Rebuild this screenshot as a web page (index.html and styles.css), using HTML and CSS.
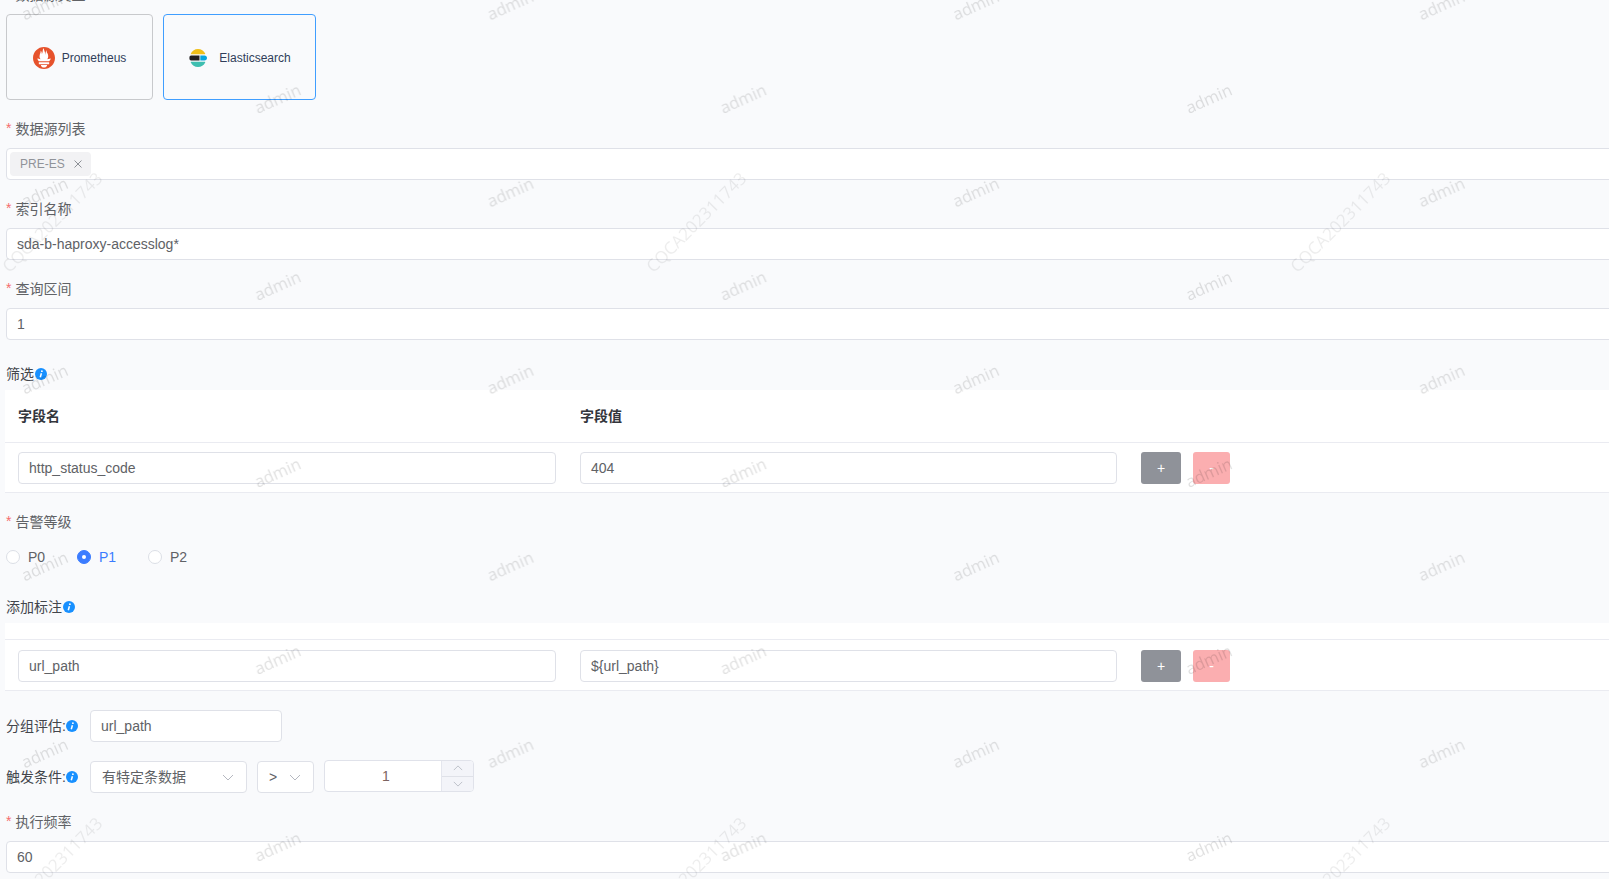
FILE: index.html
```html
<!DOCTYPE html>
<html lang="zh-CN">
<head>
<meta charset="utf-8">
<title>告警规则</title>
<link rel="stylesheet" href="styles.css">
</head>
<body>
<main class="page">
  <div class="label req"><i class="star">*</i>数据源类型</div>
  <div class="cards">
    <div class="card">
      <svg class="logo" viewBox="0 0 24 24"><circle cx="12" cy="12" r="11.5" fill="#fff"/><path fill="#e6522c" d="M12 0C5.373 0 0 5.372 0 12c0 6.627 5.373 12 12 12s12-5.373 12-12c0-6.628-5.373-12-12-12zm0 22.46c-1.885 0-3.414-1.26-3.414-2.814h6.828c0 1.553-1.528 2.813-3.414 2.813zm5.64-3.745H6.36v-2.046h11.28v2.046zm-.04-3.098H6.391c-.037-.043-.075-.086-.111-.13-1.155-1.401-1.427-2.133-1.69-2.879-.005-.025 1.4.287 2.395.511 0 0 .513.119 1.262.255-.72-.843-1.147-1.915-1.147-3.01 0-2.406 1.845-4.508 1.18-6.207.648.053 1.34 1.367 1.387 3.422.689-.951.977-2.69.977-3.755 0-1.103.727-2.385 1.454-2.429-.648 1.069.168 1.984.894 4.256.272.854.237 2.29.447 3.201.07-1.892.395-4.652 1.595-5.605-.529 1.2.079 2.702.494 3.424.671 1.164 1.078 2.047 1.078 3.716 0 1.119-.413 2.173-1.11 2.997.792-.149 1.34-.283 1.34-.283l2.573-.502s-.374 1.538-1.81 3.019z"/></svg>
      <span>Prometheus</span>
    </div>
    <div class="card active">
      <svg class="logo-es" viewBox="0 0 20 20">
        <path fill="#f0bf1a" d="M2.6 6.2C3.8 3 6.6 1 10 1c3.2 0 5.9 1.8 7.2 4.6.2.4 0 .6-.4.6z"/>
        <path fill="#231f20" d="M3 7.5h8.5v5H3C2.2 12.5 1.4 11.8 1.400 10S2.200 7.500 3 7.500z"/>
        <path fill="#07a5de" d="M12.300 7.500h4.200c1.500 0 2.500 1.100 2.500 2.500s-1 2.500-2.500 2.500h-4.200z"/>
        <path fill="#3ebeb0" d="M3 13.800h13.800c.4 0 .6.200.4.600C15.900 17.200 13.200 19 10 19c-3.300 0-6-2-7.300-4.800-.1-.200 0-.400.300-.400z"/>
      </svg>
      <span>Elasticsearch</span>
    </div>
  </div>

  <section class="item">
    <div class="label"><i class="star">*</i>数据源列表</div>
    <div class="input tags"><span class="tag">PRE-ES<svg class="tag-x" viewBox="0 0 8 8"><path d="M.5.5l7 7M7.500.5l-7 7"/></svg></span></div>
  </section>
  <section class="item">
    <div class="label"><i class="star">*</i>索引名称</div>
    <div class="input">sda-b-haproxy-accesslog*</div>
  </section>
  <section class="item">
    <div class="label"><i class="star">*</i>查询区间</div>
    <div class="input">1</div>
  </section>

  <div class="label dark filter-label">筛选<svg class="info" viewBox="0 0 12 12"><circle cx="6" cy="6" r="6"/><circle class="info-i" cx="6.900" cy="3.200" r=".9"/><path class="info-s" d="M6.400 5.200 5.300 9.300"/></svg></div>
  <div class="table">
    <div class="row head"><div class="cell">字段名</div><div class="cell">字段值</div><div class="cell"></div></div>
    <div class="row">
      <div class="cell"><div class="input">http_status_code</div></div>
      <div class="cell"><div class="input">404</div></div>
      <div class="cell actions"><span class="btn add">+</span><span class="btn del">-</span></div>
    </div>
  </div>

  <div class="label level-label"><i class="star">*</i>告警等级</div>
  <div class="radios">
    <span class="radio"><i class="dot"></i>P0</span>
    <span class="radio on"><i class="dot"></i>P1</span>
    <span class="radio"><i class="dot"></i>P2</span>
  </div>

  <div class="label dark note-label">添加标注<svg class="info" viewBox="0 0 12 12"><circle cx="6" cy="6" r="6"/><circle class="info-i" cx="6.900" cy="3.200" r=".9"/><path class="info-s" d="M6.400 5.200 5.300 9.300"/></svg></div>
  <div class="table">
    <div class="row head empty"></div>
    <div class="row tall">
      <div class="cell"><div class="input">url_path</div></div>
      <div class="cell"><div class="input">${url_path}</div></div>
      <div class="cell actions"><span class="btn add">+</span><span class="btn del">-</span></div>
    </div>
  </div>

  <div class="inline group">
    <div class="label dark inline-label">分组评估:<svg class="info" viewBox="0 0 12 12"><circle cx="6" cy="6" r="6"/><circle class="info-i" cx="6.900" cy="3.200" r=".9"/><path class="info-s" d="M6.400 5.200 5.300 9.300"/></svg></div>
    <div class="input w-group">url_path</div>
  </div>
  <div class="inline trigger">
    <div class="label dark inline-label">触发条件:<svg class="info" viewBox="0 0 12 12"><circle cx="6" cy="6" r="6"/><circle class="info-i" cx="6.900" cy="3.200" r=".9"/><path class="info-s" d="M6.400 5.200 5.300 9.300"/></svg></div>
    <div class="input select w-sel">有特定条数据<svg class="chev" viewBox="0 0 12 7"><path d="M1 1l5 5 5-5"/></svg></div>
    <div class="input select w-op">&gt;<svg class="chev" viewBox="0 0 12 7"><path d="M1 1l5 5 5-5"/></svg></div>
    <div class="number">
      <div class="num-val">1</div>
      <div class="num-handler">
        <span class="num-btn"><svg class="arrow" viewBox="0 0 12 7"><path d="M1 6l5-5 5 5"/></svg></span>
        <span class="num-btn"><svg class="arrow" viewBox="0 0 12 7"><path d="M1 1l5 5 5-5"/></svg></span>
      </div>
    </div>
  </div>
  <section class="item last">
    <div class="label"><i class="star">*</i>执行频率</div>
    <div class="input">60</div>
  </section>
</main>

<svg class="watermark" width="1609" height="879" aria-hidden="true">
  <defs>
    <pattern id="wm-admin" x="0" y="-40" width="465.600" height="187" patternUnits="userSpaceOnUse">
      <text class="wm-a" text-anchor="middle" transform="translate(45 46) rotate(-24)" y="5">admin</text>
      <text class="wm-a" text-anchor="middle" transform="translate(278 139.500) rotate(-24)" y="5">admin</text>
    </pattern>
    <pattern id="wm-id" x="-50" y="0" width="644" height="645" patternUnits="userSpaceOnUse">
      <text class="wm-b" text-anchor="middle" transform="translate(103 223) rotate(-45)" y="5">CQCA202311743</text>
    </pattern>
  </defs>
  <rect width="1609" height="879" fill="url(#wm-id)"/>
  <rect width="1609" height="879" fill="url(#wm-admin)"/>
</svg>
</body>
</html>
```
FILE: styles.css
```css
* { box-sizing: border-box; }
html, body { margin: 0; height: 879px; overflow: hidden; }
body {
  background: #f9fafc;
  color: #606266;
  font: 14px/20px "Liberation Sans", "Noto Sans CJK SC", sans-serif;
  position: relative;
}
.page { width: 1700px; margin-top: -15px; padding-left: 6px; }
.label { height: 20px; display: flex; align-items: center; color: #606266; font-size: 14px; white-space: nowrap; }
.label.dark { color: #43464c; }
.star { font-style: normal; color: #f56c6c; width: 9.500px; font-size: 14px; position: relative; top: -1px; }
.cards { display: flex; gap: 10px; margin-top: 9px; }
.card { width: 147px; height: 86px; padding-top: 2px; border: 1px solid #c8c9cc; border-radius: 4px; display: flex; align-items: center; justify-content: center; gap: 7px; color: #303e5a; font-size: 12px; }
.card.active { width: 153px; border-color: #409eff; gap: 11px; }
.logo { width: 22px; height: 22px; flex: none; }
.logo-es { width: 20px; height: 20px; flex: none; }
.item { margin-top: 19px; }
.item .label { margin-bottom: 9px; }
.input { height: 32px; background: #fff; border: 1px solid #dfe1e8; border-radius: 4px; padding: 0 10px; line-height: 30px; color: #606266; white-space: nowrap; }
.tags { padding: 0 3px; display: flex; align-items: center; }
.tag { height: 24px; width: 81px; background: #f2f2f4; border-radius: 4px; color: #909399; font-size: 12px; line-height: 24px; padding-left: 10px; display: flex; align-items: center; }
.tag-x { width: 8px; height: 8px; margin-left: 9px; }
.tag-x path { stroke: #8d9096; stroke-width: 1; fill: none; }
.filter-label { margin-top: 24px; }
.info { width: 12px; height: 12px; flex: none; margin-left: 1px; }
.inline-label .info { margin-left: 0; }
.info circle { fill: #1890ff; }
.info .info-i { fill: #fff; }
.info-s { stroke: #fff; stroke-width: 1.500; fill: none; }
.table { margin-top: 6px; margin-left: -1px; background: #fff; }
.row { display: grid; grid-template-columns: 563px 561px 1fr; height: 50px; padding-top: 9px; align-items: start; border-bottom: 1px solid #eaebf1; }
.row.tall { height: 51px; padding-top: 10px; }
.row.head { height: 53px; padding-top: 16px; font-weight: 700; color: #33363c; }
.row.head.empty { height: 17px; padding-top: 0; }
.cell { padding: 0 12px; }
.cell:first-child { padding-left: 13px; }
.actions { display: flex; gap: 12px; }
.btn { width: 40px; height: 32px; border-radius: 3px; color: #fff; display: flex; align-items: center; justify-content: center; font-size: 14px; }
.btn.add { background: #8f9299; }
.btn.del { width: 37px; background: #fbaeb0; }
.level-label { margin-top: 19px; }
.radios { display: flex; margin-top: 15px; height: 20px; align-items: center; }
.radio { display: flex; align-items: center; gap: 8px; color: #606266; width: 71px; }
.radio.on { color: #3b7cff; }
.dot { width: 14px; height: 14px; border-radius: 50%; border: 1px solid #dcdfe6; background: #fff; display: block; position: relative; flex: none; }
.on .dot { background: #3b7cff; border-color: #3b7cff; }
.on .dot::after { content: ""; position: absolute; width: 4px; height: 4px; left: 4px; top: 4px; border-radius: 50%; background: #fff; }
.note-label { margin-top: 30px; }
.inline { display: flex; align-items: center; }
.group { margin-top: 19px; }
.trigger { margin-top: 18px; align-items: flex-start; }
.trigger .inline-label { margin-top: 7px; }
.inline-label { width: 84px; }
.w-group { width: 192px; }
.select { display: flex; align-items: center; justify-content: space-between; padding: 0 12px 0 11px; margin-top: 1px; }
.w-sel { width: 157px; margin-right: 10px; }
.w-op { width: 57px; margin-right: 10px; }
.chev { width: 12px; height: 7px; flex: none; }
.chev path, .arrow path { fill: none; stroke: #b5b8c0; stroke-width: 1; }
.number { width: 150px; height: 32px; display: flex; background: #fff; border: 1px solid #e0e2ea; border-radius: 4px; overflow: hidden; }
.num-val { width: 116px; padding-left: 6px; text-align: center; line-height: 30px; color: #7d6460; }
.num-handler { flex: 1; display: flex; flex-direction: column; background: #f3f4f9; border-left: 1px solid #e4e6ee; }
.num-btn { flex: 1; display: flex; align-items: center; justify-content: center; }
.num-btn + .num-btn { border-top: 1px solid #dfe1e8; }
.arrow { width: 10px; height: 6px; }
.last { margin-top: 19px; }
.watermark { position: absolute; left: 0; top: 0; pointer-events: none; }
.wm-a { font: 16.500px "Open Sans", sans-serif; fill: rgba(0, 0, 0, .12); }
.wm-b { font: 17px "Open Sans", sans-serif; fill: rgba(0, 0, 0, .07); }
```
